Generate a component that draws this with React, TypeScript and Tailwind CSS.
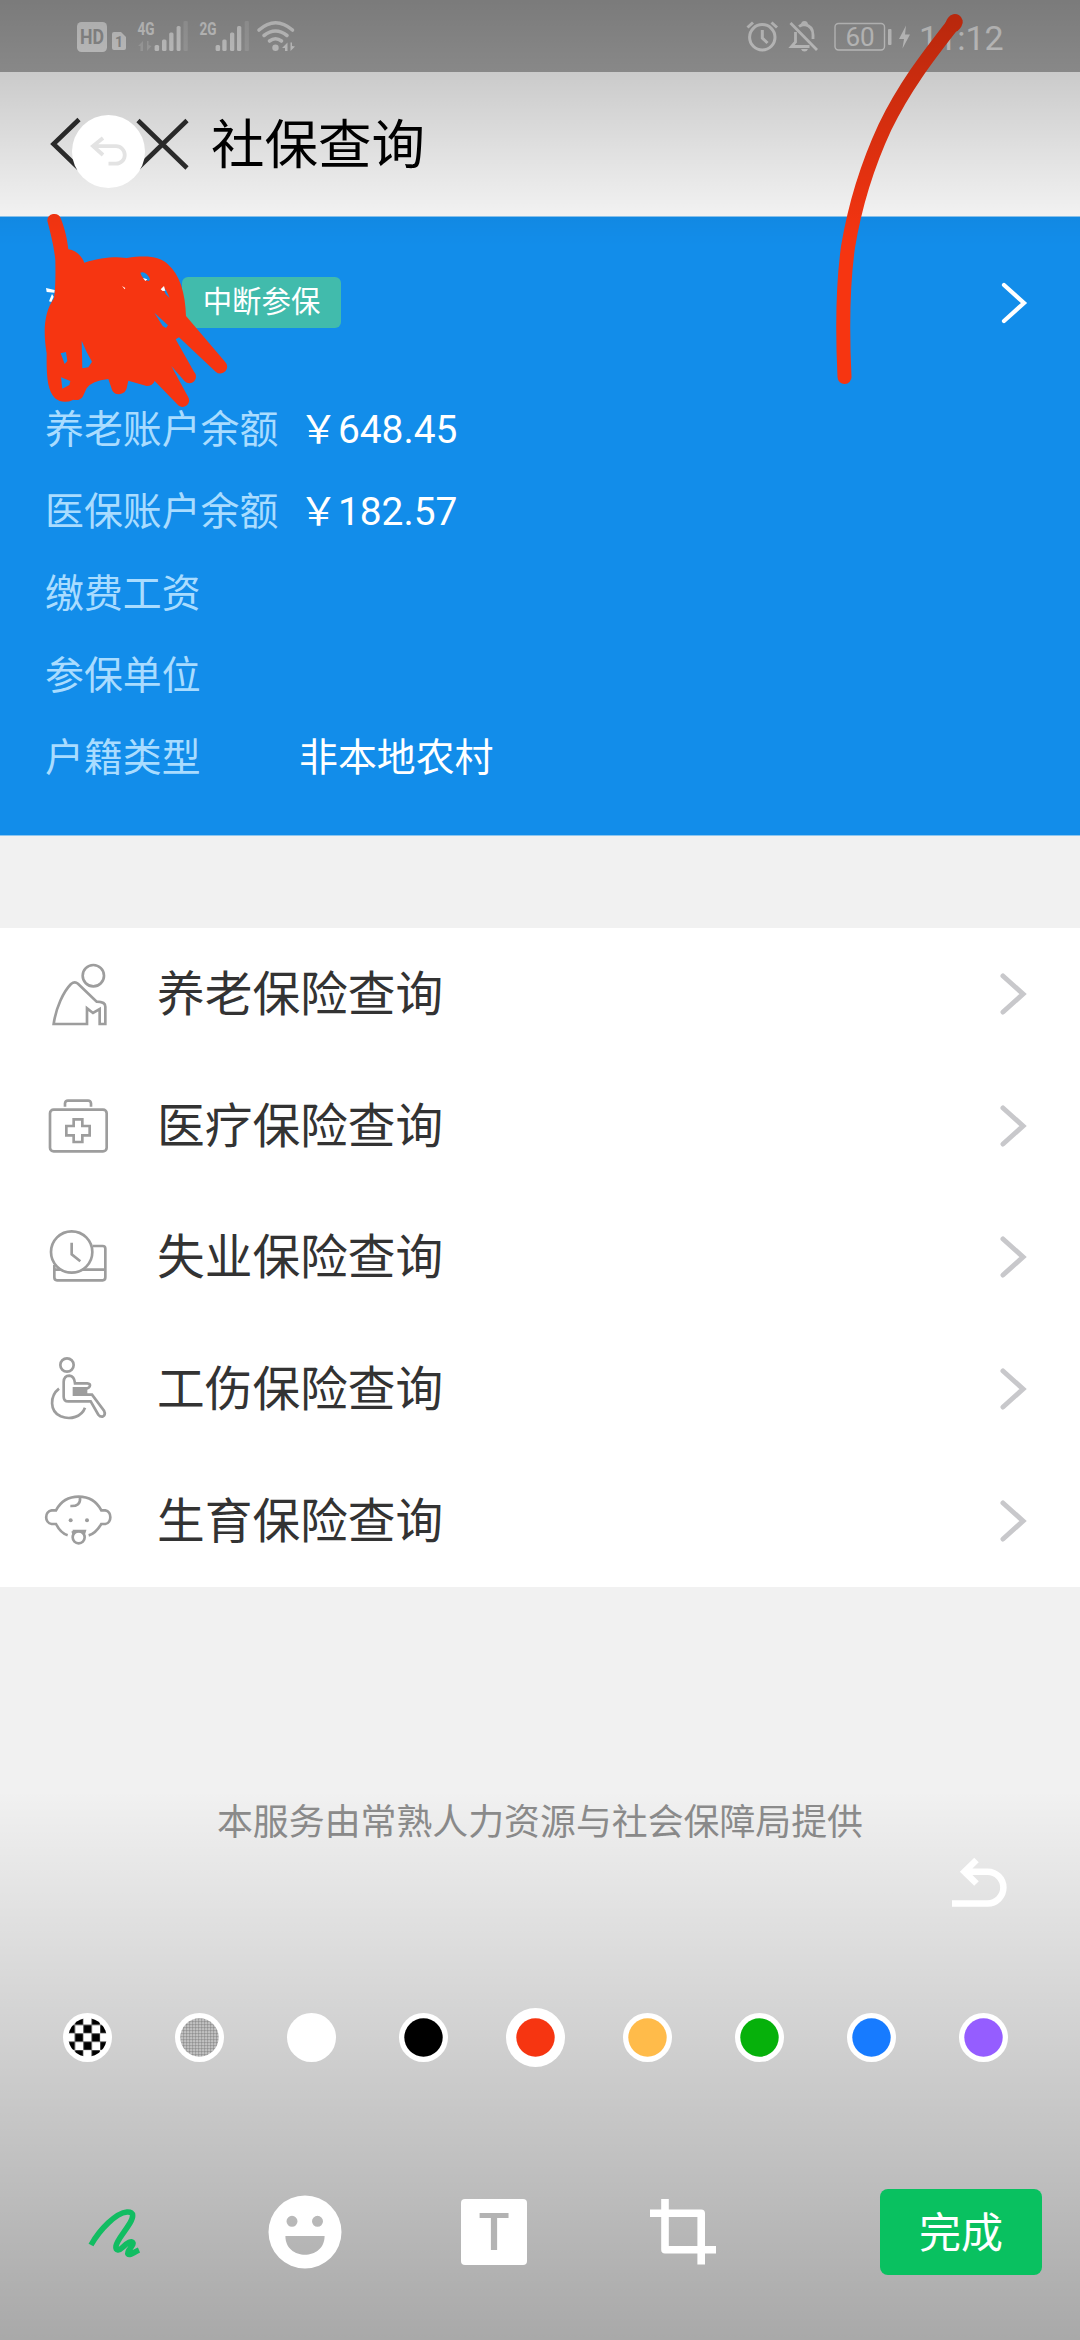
import React from 'react';

const ACCOUNT_ROWS = [
  { label: '养老账户余额', value: '￥648.45' },
  { label: '医保账户余额', value: '￥182.57' },
  { label: '缴费工资', value: '' },
  { label: '参保单位', value: '' },
  { label: '户籍类型', value: '非本地农村' },
];

const SWATCHES = ['checker', 'mosaic', '#ffffff', '#000000', '#f63511', '#ffbb4a', '#06b10b', '#177bff', '#955dff'];
const SELECTED_SWATCH = 4;

const ElderIcon = () => (
  <svg className="w-[72px] h-[72px]" viewBox="126 111 216 216" fill="none" stroke="#9d9d9d" strokeWidth="8">
    <circle cx="280" cy="164" r="32" />
    <path d="M161 309C168 260 190 212 213 189Q224 180 234 188L290 242Q316 242 316 257V309H299V264L279 276L261 262V309Z" />
  </svg>
);

const MedicalIcon = () => (
  <svg className="w-[72px] h-[72px]" viewBox="126 507 216 216" fill="none" stroke="#9d9d9d" strokeWidth="8">
    <rect x="150" y="566" width="170" height="125" rx="11" />
    <path d="M195 557V547Q196 539 204 539H264Q272 539 273 547V557" />
    <path d="M221 595h26v20h22v28h-22v20h-26v-20h-22v-28h22z" />
  </svg>
);

const ClockIcon = () => (
  <svg className="w-[72px] h-[72px]" viewBox="126 63 216 216" fill="none" stroke="#9d9d9d" strokeWidth="8">
    <circle cx="215" cy="156" r="62" />
    <path d="M215 128V163L241 184" />
    <path d="M278 138H308Q316 138 316 146V232Q316 241 308 241H171Q163 241 163 232V195M163 209H183M247 209H316" />
  </svg>
);

const WheelchairIcon = () => (
  <svg className="w-[72px] h-[72px]" viewBox="126 459 216 216" fill="none" stroke="#9d9d9d" strokeWidth="8">
    <circle cx="201" cy="495" r="20" />
    <path d="M191 546Q192 527 208 527Q223 528 225 550H262Q270 551 270 556Q269 563 262 565H222V584H276L312 632Q318 645 308 650Q300 651 295 644L272 604H205Q191 604 191 590Z" />
    <path d="M221 566H262V584H221Z" fill="#9d9d9d" stroke="none" />
    <path d="M177 566C149 588 148 634 182 649C212 661 245 650 255 623" />
  </svg>
);

const BabyIcon = () => (
  <svg className="w-[72px] h-[72px]" viewBox="126 855 216 216" fill="none" stroke="#9d9d9d" strokeWidth="8">
    <path d="M203 1006C190 1002 177 990 168 972H155C133 969 133 934 155 931H168C184 901 210 890 236 890C262 890 288 901 304 931H316C336 934 336 969 316 972H304C293 990 282 1002 266 1006" />
    <path d="M240 892C242 911 232 919 211 918" />
    <path d="M218 993H254L251 1003M218 993L221 1003" />
    <circle cx="236" cy="1012" r="18" />
    <circle cx="212" cy="961" r="6" fill="#9d9d9d" stroke="none" />
    <circle cx="261" cy="961" r="6" fill="#9d9d9d" stroke="none" />
  </svg>
);

const MENU = [
  { label: '养老保险查询', Icon: ElderIcon },
  { label: '医疗保险查询', Icon: MedicalIcon },
  { label: '失业保险查询', Icon: ClockIcon },
  { label: '工伤保险查询', Icon: WheelchairIcon },
  { label: '生育保险查询', Icon: BabyIcon },
];

const Chevron = ({ color, width }: { color: string; width: number }) => (
  <svg className="w-[28px] h-[44px] shrink-0" viewBox="0 0 28 44" fill="none" stroke={color} strokeWidth={width} strokeLinecap="round">
    <path d="M4 4L24 22L4 40" />
  </svg>
);

const StatusBar = () => (
  <div className="h-[72px] bg-[#a8a8a8] shrink-0">
    <svg className="block w-full h-[72px]" viewBox="0 0 1080 72" fill="#e6e6e6">
      {/* HD + sim card */}
      <rect x="77" y="22" width="30" height="30" rx="4.5" />
      <text x="92" y="44" textAnchor="middle" textLength="24" lengthAdjust="spacingAndGlyphs" className="font-['Roboto',sans-serif] font-bold" fontSize="20" fill="#a3a3a3">HD</text>
      <path d="M112 34Q112 32 114 32H121L126 37V48Q126 50 124 50H114Q112 50 112 48Z" />
      <text x="119" y="47" textAnchor="middle" className="font-['Roboto',sans-serif] font-bold" fontSize="14" fill="#a3a3a3">1</text>

      {/* mobile signal */}
      <text x="137.5" y="35" textLength="17" lengthAdjust="spacingAndGlyphs" className="font-['Roboto',sans-serif] font-bold" fontSize="19">4G</text>
      <g opacity="0.35">
        <path d="M138 46L143 41V51H140.500V46ZM151.500 46L147 51V41H148.500V45Z" />
      </g>
      <rect x="154.600" y="45" width="4.500" height="6" rx="1.500" />
      <rect x="162" y="39.500" width="4.500" height="11.500" rx="1.500" />
      <rect x="169.200" y="32.500" width="4.300" height="18.500" rx="1.500" />
      <rect x="176.600" y="26" width="4" height="25" rx="1.500" />
      <rect x="183.500" y="21" width="4.300" height="30" rx="1" opacity="0.25" />

      <text x="199.500" y="35" textLength="17" lengthAdjust="spacingAndGlyphs" className="font-['Roboto',sans-serif] font-bold" fontSize="19">2G</text>
      <rect x="215.600" y="45" width="4.500" height="6" rx="1.500" />
      <rect x="222.300" y="39.500" width="4.300" height="11.500" rx="1.500" />
      <rect x="230" y="32.500" width="4.300" height="18.500" rx="1.500" />
      <rect x="237" y="26" width="4.300" height="25" rx="1.500" />
      <rect x="244.600" y="21" width="4.300" height="30" rx="1" opacity="0.25" />

      {/* wifi */}
      <g fill="none" stroke="#e6e6e6" strokeWidth="3.6" strokeLinecap="round">
        <path d="M259 30Q275.500 15.500 292.500 30" />
        <path d="M264 35.500Q275.500 26.500 287 35.500" />
        <path d="M269.500 41Q275.500 36.500 281.500 41" />
      </g>
      <circle cx="275.500" cy="47.800" r="3.200" />
      <path d="M282 48L287.500 42.500V51H285V48ZM295 46.500L290.500 51V42.500H292V46Z" />

      {/* alarm */}
      <g fill="none" stroke="#e6e6e6" strokeWidth="3">
        <circle cx="762.300" cy="37.300" r="12.700" />
        <path d="M762.300 30V38L767.500 43M747.500 27.500L753 22.500M777 27.500L771.500 22.500" />
      </g>

      {/* bell off */}
      <g fill="none" stroke="#e6e6e6" strokeWidth="2.800">
        <path d="M790.500 23L817 50M799 26.500Q801.500 24.500 804.500 24.500Q813 26 813 35V39M795.500 32V42L791.500 46.500H809.500" />
      </g>
      <path d="M801 49H808Q807 51.500 804.500 51.500Q802 51.500 801 49ZM801 25Q801 21 804.500 21Q808 21 808 25Z" />

      {/* battery */}
      <rect x="835" y="23.500" width="49.500" height="26.500" rx="3.500" fill="none" stroke="#e6e6e6" strokeWidth="1.400" />
      <rect x="888" y="29" width="3.500" height="16" rx="1" />
      <text x="860" y="45.500" textAnchor="middle" className="font-['Roboto',sans-serif]" fontSize="26">60</text>
      <path d="M906 25.500L899 39H904L902.500 48.500L910 34.500H905Z" />
      <text x="919" y="49.500" className="font-['Roboto',sans-serif]" fontSize="34">11:12</text>
    </svg>
  </div>
);

const TitleBar = () => (
  <div className="h-[144px] bg-[#fafafa] flex items-center shrink-0 pl-[48px]">
    <svg className="w-[144px] h-[54px] shrink-0" viewBox="0 0 144 54" fill="none" stroke="#2f2f2f" strokeWidth="4.6">
      <path d="M31 2.500L5.500 27L31 51.500" />
      <path d="M90 3.500L139 51M139 3.500L90 51" />
    </svg>
    <h1 className="ml-[19px] pt-[3px] text-[53.5px] leading-[54px] text-black">社保查询</h1>
  </div>
);

const AccountCard = () => (
  <section className="h-[620px] bg-[#128dea] border-t border-b border-[#8cc6f0] shrink-0 text-white">
    <div className="h-[171px] flex items-center justify-between pl-[182px] pr-[52px]">
      <span className="w-[159px] h-[51px] rounded-md bg-[#41bbac] text-[29.4px] leading-[50px] text-center">中断参保</span>
      <Chevron color="#ffffff" width={4.2} />
    </div>
    <dl>
      {ACCOUNT_ROWS.map(row => (
        <div key={row.label} className="h-[82px] flex items-center pt-px pl-[45px] text-[38.9px] leading-[50px]">
          <dt className="w-[254px] text-[#a9dcff]">{row.label}</dt>
          <dd>{row.value}</dd>
        </div>
      ))}
    </dl>
  </section>
);

const InsuranceMenu = () => (
  <ul className="mt-[92px] h-[659px] bg-white flex flex-col shrink-0">
    {MENU.map(({ label, Icon }) => (
      <li key={label} className="flex-1 flex items-center pl-[42px] pr-[53px]">
        <Icon />
        <span className="ml-[43px] pt-[2px] flex-1 text-[47.7px] leading-[60px] text-[#333333]">{label}</span>
        <Chevron color="#c8c8cb" width={5} />
      </li>
    ))}
  </ul>
);

// Freehand strokes drawn by the user over the page
const Doodles = () => (
  <>
    <svg className="absolute left-[30px] top-[210px] w-[210px] h-[210px]" viewBox="0 0 630 630">
      <path
        fill="#f63511"
        fillRule="evenodd"
        d="M52 32A21 21 0 0 1 92 24C106 60 112 90 115 118C138 120 155 138 163 158C200 147 230 142 262 142L290 144C350 136 385 138 413 162C450 195 466 250 468 318L585 455A19 19 0 0 1 557 485L447 382L437 388L492 485A19 19 0 0 1 464 514L424 468L474 560A19 19 0 0 1 441 582L374 513Q368 528 350 528L295 512L290 535A24 24 0 0 1 247 542L235 507Q185 512 170 535L158 560Q148 574 130 569Q100 584 75 565C52 540 49 500 50 430C40 370 40 310 72 265C76 240 77 200 76 150C72 110 62 70 52 32Z
        M92 430L108 426L112 453L104 462Z M155 392Q168 425 186 455L175 472L157 475Z M93 502L121 513L118 525L97 536Z M331 188Q348 182 360 207L357 213Q338 210 331 188Z M397 230L408 240L419 264L407 252Z M373 308L414 346L408 354L398 348Z"
      />
      <path fill="#ffffff" d="M48 234L74 240L73 248L50 246ZM66 252L71 260L64 276L57 274ZM276 228L286 234L284 238ZM339 204L352 208L346 213ZM392 238L402 228L406 242L398 243Z" />
    </svg>
    <svg className="absolute left-[820px] top-0 w-[160px] h-[400px]" viewBox="820 0 160 400" fill="none" stroke="#f63511" strokeLinecap="round">
      <path strokeWidth="14" d="M954 23C925 60 904 88 885 127C866 168 855 205 848 247C843 283 842 325 844.500 377" />
      <path strokeWidth="16" d="M954.800 22L953.500 24" />
    </svg>
  </>
);

const Swatch = ({ color, selected }: { color: string; selected: boolean }) => (
  <div className="w-[59px] h-[59px] flex items-center justify-center">
    <svg className={selected ? 'w-[59px] h-[59px]' : 'w-[49px] h-[49px]'} viewBox={selected ? '-29.5 -29.5 59 59' : '-24.5 -24.5 49 49'}>
      <defs>
        <pattern id="checker" x="-4.2" y="-4.2" width="16.8" height="16.8" patternUnits="userSpaceOnUse">
          <rect width="16.8" height="16.8" fill="#ffffff" />
          <path d="M8.400 0H16.800V8.400H8.400ZM0 8.400H8.400V16.800H0Z" fill="#000000" stroke="#777777" strokeWidth="0.8" />
        </pattern>
        <pattern id="mosaic" x="0" y="0" width="3" height="3" patternUnits="userSpaceOnUse">
          <rect width="3" height="3" fill="#b4b4b4" />
          <rect width="1" height="1" x="0" y="0" fill="#ffffff" />
          <rect width="1.200" height="1.200" x="1.500" y="1.500" fill="#555555" />
        </pattern>
      </defs>
      <circle r={selected ? 29.5 : 24.5} fill="#ffffff" />
      <circle r="19.2" fill={color.startsWith('#') ? color : `url(#${color})`} />
    </svg>
  </div>
);

const EditorTools = () => (
  <div className="absolute inset-x-0 bottom-0 h-[550px] flex flex-col bg-gradient-to-b from-black/0 to-black/30">
    <div className="pt-[66px] pr-[72px] flex justify-end">
      <svg className="w-[58px] h-[54px]" viewBox="950 1856 58 54" fill="none" stroke="#ffffff" strokeWidth="6.500">
        <path d="M976.500 1860L964.500 1871.700L976.500 1883.500M965 1871.700H987.500A15.900 15.900 0 0 1 987.500 1903.500H952" />
      </svg>
    </div>
    <div className="mt-[98px] pl-[58px] pr-[67px] flex justify-between">
      {SWATCHES.map((color, i) => (
        <Swatch key={color} color={color} selected={i === SELECTED_SWATCH} />
      ))}
    </div>
    <div className="mt-[122px] h-[86px] pl-[88px] pr-[38px] flex items-center">
      <svg className="w-[54px] h-[54px]" viewBox="0 0 54 54" fill="none" stroke="#12bd62" strokeWidth="5.600" strokeLinejoin="round">
        <path d="M3 40C12 24 28 8 39 7C47 6.500 45 13 42 18C36 28 29 35 28 41C27 47 32 45 35 42C39 38 44 35 45 38C46 41 38 46 40 49C42 51 46 47 51 45" />
      </svg>
      <svg className="ml-[126px] w-[74px] h-[74px]" viewBox="0 0 74 74">
        <path
          fill="#ffffff"
          fillRule="evenodd"
          d="M37 .5A36.500 36.500 0 1 1 37 73.500A36.500 36.500 0 1 1 37 .5ZM24 20.800A5.500 5.500 0 1 0 24 31.800A5.500 5.500 0 1 0 24 20.800ZM49.500 20.800A5.500 5.500 0 1 0 49.500 31.800A5.500 5.500 0 1 0 49.500 20.800ZM17.400 41H56.600C56.600 66 17.400 66 17.400 41Z"
        />
      </svg>
      <div className="ml-[119px] w-[66px] h-[66px] rounded bg-white text-[#b3b3b3] text-center font-['Roboto',sans-serif] font-medium text-[51px] leading-[67px]">T</div>
      <svg className="ml-[123px] w-[66px] h-[66px]" viewBox="0 0 66 66" fill="none" stroke="#ffffff" strokeWidth="7.600" strokeLinejoin="round">
        <path d="M15 0V50.700H66M0 14.200H51.200V65.500" />
      </svg>
      <button className="ml-auto w-[162px] h-[86px] pt-[4px] rounded-lg bg-[#09c160] text-white text-[42px] leading-[82px]">完成</button>
    </div>
  </div>
);

export default function App() {
  return (
    <div className="relative w-[1080px] h-[2340px] overflow-hidden bg-[#f1f1f1] flex flex-col font-['Roboto','Noto_Sans_CJK_SC',sans-serif]">
      <StatusBar />
      <TitleBar />
      <AccountCard />
      <InsuranceMenu />
      <p className="mt-[211px] text-center text-[35.9px] leading-[50px] text-[#8c8c8c]">本服务由常熟人力资源与社会保障局提供</p>

      <Doodles />
      <div className="absolute inset-x-0 top-0 h-[246px] bg-gradient-to-b from-black/27 to-black/0" />
      <div className="absolute left-[72px] top-[115px] w-[73px] h-[73px] rounded-full bg-white flex items-center justify-center">
        <svg className="w-[40px] h-[32px]" viewBox="89 136 40 32" fill="none" stroke="#e3e3e3" strokeWidth="3.800">
          <path d="M103 138L93 146L103 155M93.500 146.200H116A8.700 8.700 0 0 1 116 163.700H108.500" />
        </svg>
      </div>
      <EditorTools />
    </div>
  );
}
